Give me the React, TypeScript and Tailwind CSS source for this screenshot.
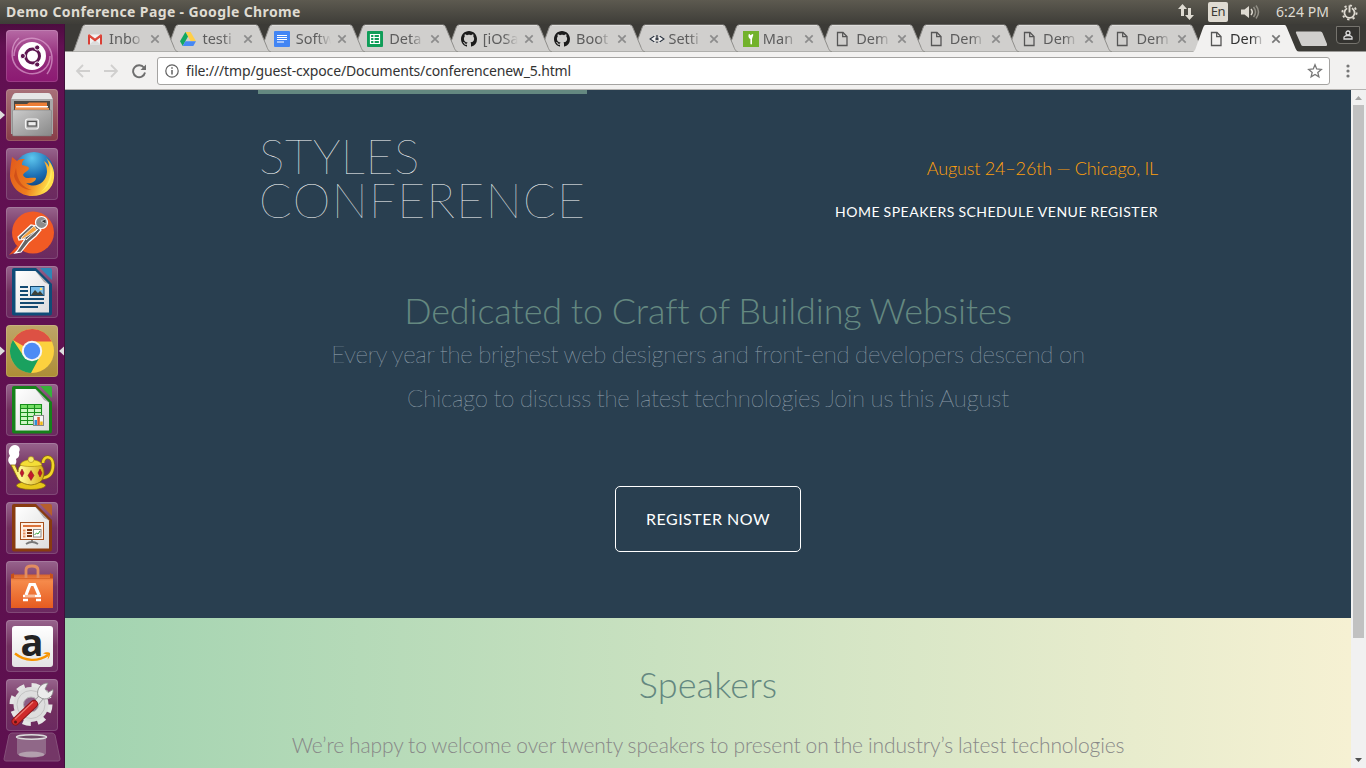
import React from "react";

const UI = "font-['Noto_Sans','Open_Sans',sans-serif]";

/* ---------- favicons ---------- */

const Gmail = () => (
  <svg viewBox="0 0 16 16" className="h-4 w-4">
    <path d="M1 3.5h14v10H1z" fill="#f2f2f2" />
    <path d="M2.5 13.5 8 8.6l5.5 4.9z" fill="#dcdcdc" />
    <path d="M1 13.5V3.6L8 9l7-5.4v9.9h-2V6.6L8 10.5 3 6.6v6.9z" fill="#d93f35" />
    <path d="M1 4.5 2 3l6 4.6L14 3l1 1.5-7 5.4z" fill="#dd4b3e" />
  </svg>
);
const Drive = () => (
  <svg viewBox="0 0 16 16" className="h-4 w-4">
    <path d="M5.4 1h5.2L16 10.2h-5.3z" fill="#ffcf48" />
    <path d="M5.4 1 0 10.3 2.7 15 8 5.6z" fill="#11a861" />
    <path d="M5.4 10.2H16L13.3 15H2.7z" fill="#4688f4" />
  </svg>
);
const Docs = () => (
  <svg viewBox="0 0 16 16" className="h-4 w-4">
    <rect width="16" height="16" rx="1" fill="#4285f4" />
    <path d="M3 4.500h10M3 6.500h10M3 8.500h10M3 11h7" stroke="#fff" strokeWidth="1.100" />
  </svg>
);
const Sheets = () => (
  <svg viewBox="0 0 16 16" className="h-4 w-4">
    <rect width="16" height="16" rx="1" fill="#0f9d58" />
    <path d="M3.5 3.5h9v9h-9zM3.5 6.5h9M3.5 9.5h9M7 3.5v9" stroke="#fff" strokeWidth="1.2" fill="none" />
  </svg>
);
const GitHub = () => (
  <svg viewBox="0 0 16 16" className="h-4 w-4">
    <path
      fill="#1b1b1b"
      d="M8 0C3.58 0 0 3.58 0 8c0 3.54 2.29 6.53 5.47 7.59.4.07.55-.17.55-.38 0-.19-.01-.82-.01-1.49-2.01.37-2.53-.49-2.69-.94-.09-.23-.48-.94-.82-1.13-.28-.15-.68-.52-.01-.53.63-.01 1.08.58 1.23.82.72 1.21 1.87.87 2.33.66.07-.52.28-.87.51-1.07-1.78-.2-3.64-.89-3.64-3.95 0-.87.31-1.59.82-2.15-.08-.2-.36-1.02.08-2.12 0 0 .67-.21 2.2.82.64-.18 1.32-.27 2-.27s1.36.09 2 .27c1.53-1.04 2.2-.82 2.2-.82.44 1.1.16 1.92.08 2.12.51.56.82 1.27.82 2.15 0 3.07-1.87 3.75-3.65 3.95.29.25.54.73.54 1.48 0 1.07-.01 1.93-.01 2.2 0 .21.15.46.55.38A8.01 8.01 0 0 0 16 8c0-4.42-3.58-8-8-8z"
    />
  </svg>
);
const CodeMark = () => (
  <svg viewBox="0 0 16 16" className="-ml-px h-4 w-4 translate-x-[3px]">
    <path d="M0 8 6 3.500v9z M16 8 10 3.500v9z" fill="#f4f4f4" />
    <path d="M5.400 5 1 8l4.400 3M10.600 5 15 8l-4.400 3" stroke="#2d3540" strokeWidth="1.200" fill="none" />
    <path d="M8 4v5M8 10.500v1.500M6.500 8h3" stroke="#2d3540" strokeWidth="1.300" />
  </svg>
);
const Green = () => (
  <svg viewBox="0 0 16 16" className="h-4 w-4 translate-x-[2px]">
    <rect width="16" height="16" fill="#72b22b" />
    <path d="M5.500 4q0-1 1-1l1 1.300L9.500 3q.8 0 .8 1L9.300 7 9 8v4.800c0 .8-1.600.8-1.600 0V8C6 7.500 5.200 6 5.500 4z" fill="#fff" />
  </svg>
);
const File = () => (
  <svg viewBox="0 0 16 16" className="h-4 w-4">
    <path d="M3.500 1.500h5.500l4 4v9h-9.500z" fill="none" stroke="#565656" strokeWidth="1.300" />
    <path d="M8.700 1.500v4.200H13" fill="none" stroke="#565656" strokeWidth="1.300" />
  </svg>
);

const tabs: { icon: React.ReactNode; label: string }[] = [
  { icon: <Gmail />, label: "Inbo" },
  { icon: <Drive />, label: "testi" },
  { icon: <Docs />, label: "Softw" },
  { icon: <Sheets />, label: "Deta" },
  { icon: <GitHub />, label: "[iOSa" },
  { icon: <GitHub />, label: "Boot" },
  { icon: <CodeMark />, label: "Setti" },
  { icon: <Green />, label: "Man" },
  { icon: <File />, label: "Dem" },
  { icon: <File />, label: "Dem" },
  { icon: <File />, label: "Dem" },
  { icon: <File />, label: "Dem" },
  { icon: <File />, label: "Dem" },
];

function Tab({ icon, label, index, active }: { icon: React.ReactNode; label: string; index: number; active: boolean }) {
  return (
    <div className="relative -mr-[12.600px] h-7 w-[106px] shrink-0" style={{ zIndex: active ? 30 : 20 - index }}>
      <svg viewBox="0 0 106 28" className="absolute inset-0 h-7 w-[106px]">
        <path
          d="M0 28 C2 27 2.500 25 3.500 22 L10 4 C11 1.500 11.500 1 13 1 H91 C92.500 1 93 1.500 94 4 L101.500 22 C103 26 104 27.500 106 28 Z"
          fill={active ? "#f2f1f0" : "#d0cfcd"}
          stroke={active ? "none" : "#8f8e8b"}
          strokeWidth="1"
        />
        <path d="M13 1.500H91" stroke={active ? "#fafafa" : "#dedddb"} />
      </svg>
      <div className="relative flex h-7 items-center pt-px pl-[15px]">
        {icon}
        <span
          className={
            "ml-[6px] w-[35px] whitespace-nowrap text-[14.500px] [mask-image:linear-gradient(to_right,black_60%,transparent)] " +
            (active ? "text-[#333]" : "text-[#5d5d5d]")
          }
        >
          {label}
        </span>
        <svg viewBox="0 0 10 10" className="ml-[6px] h-[10px] w-[10px]">
          <path d="M1.300 1.300 8.700 8.700M8.700 1.300 1.300 8.700" stroke={active ? "#777" : "#8c8c8c"} strokeWidth="1.700" />
        </svg>
      </div>
    </div>
  );
}

/* ---------- launcher ---------- */

const Ubuntu = () => (
  <svg viewBox="0 0 52 52" className="h-full w-full">
    <path d="M8 26C8 8 30 2 42 16c6 8 5 20-1 28M44 26c0 18-22 24-34 10C4 28 5 14 13 8" stroke="#e7b4dc" strokeWidth="1.500" opacity=".6" fill="none" />
    <circle cx="26" cy="26" r="14" fill="#fff" />
    <circle cx="26.500" cy="26" r="7" fill="none" stroke="#5e1650" strokeWidth="3" />
    <g fill="#5e1650" stroke="#fff" strokeWidth="1">
      <circle cx="16.800" cy="26" r="2.600" />
      <circle cx="31.200" cy="17.500" r="2.600" />
      <circle cx="31.200" cy="34.500" r="2.600" />
    </g>
  </svg>
);
const Files = () => (
  <svg viewBox="0 0 52 52" className="h-full w-full">
    <defs>
      <linearGradient id="cab" x1="0" y1="0" x2="1" y2="1">
        <stop offset="0" stopColor="#ccc" />
        <stop offset="1" stopColor="#888" />
      </linearGradient>
    </defs>
    <path d="M7 6q1-2 3-2h32q2 0 3 2l2 4v35H5V10z" fill="#a9a9a9" />
    <path d="M7 6q1-2 3-2h32q2 0 3 2l1.500 4h-41z" fill="#e6e6e6" />
    <path d="M8 12h36v10H8z" fill="#4b4843" />
    <path d="M9 15h12l2-1.500h18V21H9z" fill="#ed7e36" />
    <path d="M10 17h32v1.500H10z" fill="#fff" />
    <path d="M9 19h34v3H9z" fill="#f19751" />
    <rect x="6.500" y="21" width="39" height="26" rx="1" fill="url(#cab)" stroke="#777" strokeWidth=".5" />
    <rect x="19.500" y="30" width="13" height="10" rx="2.500" fill="#b9b9b9" stroke="#f3f3f3" strokeWidth="1.200" />
    <rect x="21.800" y="32.500" width="8.500" height="4.500" fill="#eee" stroke="#555" strokeWidth="1.200" />
  </svg>
);
const Firefox = () => (
  <svg viewBox="0 0 52 52" className="h-full w-full">
    <defs>
      <radialGradient id="globe" cx=".45" cy=".15" r=".9">
        <stop offset="0" stopColor="#5dc6ee" />
        <stop offset=".5" stopColor="#1c6fb4" />
        <stop offset="1" stopColor="#0a2b63" />
      </radialGradient>
      <linearGradient id="fox" x1="0" y1="0" x2="1" y2=".35">
        <stop offset="0" stopColor="#e0571c" />
        <stop offset=".6" stopColor="#ee7d1d" />
        <stop offset="1" stopColor="#ffe04a" />
      </linearGradient>
    </defs>
    <circle cx="28" cy="24" r="20" fill="url(#globe)" />
    <path
      d="M6 9c2 1 3 3 5 4 2-2 5-2 8-2-3 2-3 4-3 6 3 1 6 1 7 3 0 3-5 4-6 7 2 5 8 2 13 3 0 4-6 6-10 5 8 6 20 1 21-11 0-6-2-8-3-11 3 2 4 4 5 6 0-4-1-6-3-9 6 5 9 12 8 20-1 11-10 18-22 18S5 39 4 28c0-7 1-12 2-19z"
      fill="url(#fox)"
    />
    <path d="M44 15c4 10 2 22-9 29 8-8 11-17 9-29z" fill="#fff06a" opacity=".8" />
    <path d="M10 20c1 13 7 20 16 22-9 0-16-6-18-14z" fill="#b93213" opacity=".45" />
  </svg>
);
const Postman = () => (
  <svg viewBox="0 0 52 52" className="h-full w-full">
    <circle cx="27" cy="25.500" r="21" fill="#f15a24" />
    <path d="M3 48 11 39 16 43 8 46z" fill="#e94f1e" />
    <path d="M31 19 25 18 12 30l1 3 6-1-8 12-2 2 6-1 8-10 7-6 5-6z" fill="#666" stroke="#fff" strokeWidth="1.200" />
    <path d="m28 19-12 11-1 3 16-10z" fill="#f8a13a" stroke="#fff" strokeWidth=".8" />
    <path d="m32 22-12 11" stroke="#fff" strokeWidth="1" />
    <circle cx="35.500" cy="15.500" r="6" fill="#8c8c8c" stroke="#fff" strokeWidth="1.200" />
    <path d="m35 14 5-2v5z" fill="#333" stroke="#ddd" strokeWidth=".7" />
  </svg>
);
function Office({ id, edge, fold, children }: { id: string; edge: string; fold: string; children: React.ReactNode }) {
  return (
    <svg viewBox="0 0 52 52" className="h-full w-full">
      <defs>
        <linearGradient id={id} x1="0" y1="0" x2="1" y2="1">
          <stop offset="0" stopColor="#fff" />
          <stop offset="1" stopColor="#ddd" />
        </linearGradient>
      </defs>
      <path d="M8 2h22l16 16v29q0 2.500-2 2.500H8q-2 0-2-2V4q0-2 2-2z" fill={edge} />
      <path d="M34 2h10q2 0 2 2v10z" fill={fold} />
      <path d="M9.500 5h20L43 18.500V46.500H9.500z" fill={`url(#${id})`} />
      <path d="M29.500 5 43 18.500 38 16z" fill="#aaa" />
      {children}
    </svg>
  );
}
const Writer = () => (
  <Office id="wr" edge="#0f4c78" fold="#2f86b6">
    <path d="M14 21h8M14 25h8M14 29h8M14 33h24M14 37h24M14 41h18" stroke="#134a72" strokeWidth="1.800" />
    <rect x="24.500" y="20.500" width="13.500" height="9" fill="#79bdea" stroke="#134a72" />
    <path d="m25 29 4-5 3 3 2-2 3.500 4z" fill="#3f4238" />
    <circle cx="35" cy="23" r="1.300" fill="#ffe36d" />
  </Office>
);
const Calc = () => (
  <Office id="ca" edge="#16811a" fold="#37b13a">
    <path d="M14 20h22v20H14z" fill="#cdf7c4" />
    <path d="M14 20h22v4H14z" fill="#75de65" />
    <path d="M14.500 20.500h21v20h-21zM14 24.500h22M14 28.500h22M14 32.500h22M14 36.500h22M21.500 20v20M28.500 20v20" stroke="#188f1c" strokeWidth="1.100" fill="none" />
    <rect x="27.500" y="31.500" width="10" height="10" fill="#f5f5f5" stroke="#888" />
    <path d="M28.500 36h2.500v5h-2.500z" fill="#2e8fd8" />
    <path d="M31.300 33h2.500v8h-2.500z" fill="#e05c2e" />
    <path d="M34.200 37.500h2.500v3.500h-2.500z" fill="#f1b914" />
  </Office>
);
const Impress = () => (
  <Office id="im" edge="#883b10" fold="#b65f2d">
    <rect x="14.500" y="20.500" width="23" height="17" fill="#fff0e4" stroke="#a5501f" />
    <path d="M17 24h18" stroke="#dc743c" strokeWidth="2" />
    <path d="M17 28.500h2.500M17 31.500h2.500M17 34.500h2.500" stroke="#e99364" strokeWidth="2" />
    <path d="M21 28h5M21 31h5M21 34h5" stroke="#7b3510" strokeWidth="2" />
    <rect x="27.500" y="27.500" width="7.500" height="7.500" fill="#fff" stroke="#888" />
    <path d="m28.500 33 2-2 1.500 1 2-3" stroke="#32a438" fill="none" />
    <path d="M26 38v2M20 42q6-4 12 0" stroke="#777" strokeWidth="1.800" fill="none" />
  </Office>
);
const Teapot = () => (
  <svg viewBox="0 0 52 52" className="h-full w-full">
    <defs>
      <linearGradient id="pot" x1="0" y1="0" x2="1" y2="0">
        <stop offset="0" stopColor="#f6e23a" />
        <stop offset=".3" stopColor="#fff894" />
        <stop offset="1" stopColor="#d8ae12" />
      </linearGradient>
    </defs>
    <path d="M5 22c-4-3-3-7-1-9C1 8 4 2 9 2c4 0 6 4 4 7 1 4-1 6-3 7 1 3 0 5-2 7z" fill="#fff" />
    <path d="M37 20c0-8 10-8 10 2 0 8-4 13-12 13" fill="none" stroke="#8b7107" strokeWidth="4" />
    <path d="M37 20c0-8 10-8 10 2 0 8-4 13-12 13" fill="none" stroke="#f2d52a" strokeWidth="2.500" />
    <ellipse cx="25" cy="42.500" rx="14.500" ry="4" fill="#e7c71c" stroke="#866a08" strokeWidth=".7" />
    <path d="M5 22h4l3 7c0-5 2-9 13-9s13 4 13 10-3 11-13 12C14 41 12 36 10 32z" fill="url(#pot)" stroke="#866a08" strokeWidth=".8" />
    <path d="M14 22c2-7 20-7 22 0-4 2-18 2-22 0z" fill="#f4de37" stroke="#a5850c" strokeWidth=".6" />
    <circle cx="25" cy="16.500" r="3" fill="#f8e96c" stroke="#a5850c" strokeWidth=".6" />
    <path d="m16 26 2 4-2 4-2-4zM25 27.500l3 5-3 5-3-5zM34 26l2 4-2 4-2-4z" fill="#c3182b" stroke="#7b1420" strokeWidth=".5" />
  </svg>
);
const Software = () => (
  <svg viewBox="0 0 52 52" className="h-full w-full">
    <defs>
      <linearGradient id="bag" x1="0" y1="0" x2="0" y2="1">
        <stop offset="0" stopColor="#d9662d" />
        <stop offset=".2" stopColor="#f58a4b" />
        <stop offset="1" stopColor="#e65b20" />
      </linearGradient>
    </defs>
    <path d="M5 13.500h42V47H5z" fill="url(#bag)" />
    <path d="M5 13.500 8 12v5h36v-5l3 1.500v4H5z" fill="#c6501b" />
    <path d="M20 17V9q0-4 6-4t6 4v8" fill="none" stroke="#e18c61" strokeWidth="2.800" />
    <path d="m20 34 4-10.500h4.500L33 34" fill="none" stroke="#fff" strokeWidth="3.200" />
    <path d="M17 35h18M17 39h5M30 39h5" stroke="#fff" strokeWidth="2.400" />
    <path d="M19 35h10" stroke="#f47b37" strokeWidth="1" />
  </svg>
);
const Amazon = () => (
  <div className="flex h-full items-center justify-center">
    <div className="relative flex h-[41px] w-[41px] justify-center rounded-[3px] bg-gradient-to-b from-white to-[#e4e4e4]">
      <span className="-mt-[7px] font-['Open_Sans',sans-serif] text-[38px] leading-[44px] font-bold text-[#222]">a</span>
      <svg viewBox="0 0 41 41" className="absolute inset-0 h-full w-full">
        <path d="M3 27.500c10 8 23 8.500 33 1.500" stroke="#f79400" strokeWidth="2.400" fill="none" />
        <path d="M31 27.500c2-1.500 6-1.500 7-.5.500 2-1 5-2.500 6.500.5-2 1.200-3.500.7-4.500-1.200-.8-3.200-1-5.200-1.500z" fill="#f79400" />
      </svg>
    </div>
  </div>
);
const Settings = () => (
  <svg viewBox="0 0 52 52" className="h-full w-full">
    <circle cx="25" cy="25.500" r="19" fill="none" stroke="#e5e5e5" strokeWidth="5" strokeDasharray="8 6.920" />
    <circle cx="25" cy="25.500" r="12.500" fill="none" stroke="#dedede" strokeWidth="10" />
    <circle cx="25" cy="25.500" r="14" fill="none" stroke="#c4c4c4" strokeWidth="1" />
    <circle cx="25" cy="25.500" r="7.500" fill="#8d5f85" stroke="#bbb" />
    <path d="M26 29 37 16" stroke="#999" strokeWidth="6" />
    <path d="M26 29 37 16" stroke="#e2e2e2" strokeWidth="4.500" />
    <path d="M32 17c-2-7 3-13 10-13l-3 6 3 3.500 5-3c1 6-5 11-11 9z" fill="#ececec" stroke="#888" strokeWidth=".8" />
    <path d="M9.500 42.500 28 25" stroke="#8c1519" strokeWidth="8" strokeLinecap="round" />
    <path d="M9.500 42.500 28 25" stroke="#cf2a2b" strokeWidth="6.200" strokeLinecap="round" />
    <path d="m9 40 18-17" stroke="#ee7b73" strokeWidth="1.200" />
    <circle cx="9.500" cy="43" r="1.500" fill="#5d1515" />
  </svg>
);
const Chrome = () => (
  <svg viewBox="0 0 52 52" className="h-full w-full">
    <circle cx="26" cy="26" r="22" fill="#fcd13e" />
    <path d="M26 26 6.950 15A22 22 0 0 1 45.800 16.400H26z" fill="#dd5144" />
    <path d="M6.950 15A22 22 0 0 0 25 48l9.300-17.200L17.500 31z" fill="#1aa15f" />
    <circle cx="26" cy="26" r="10.200" fill="#f5f5f5" />
    <circle cx="26" cy="26" r="8.200" fill="#4c8bf5" />
  </svg>
);

const PLAIN = "bg-gradient-to-b from-[#97648d] via-[#72305f] to-[#6b2960]";
const launcher: { node: React.ReactNode; tint: string; left?: boolean; right?: boolean }[] = [
  { node: <Ubuntu />, tint: "bg-gradient-to-b from-[#b66aa5] via-[#942a7c] to-[#8c1972]" },
  { node: <Files />, tint: "bg-gradient-to-b from-[#a87179] to-[#873c47]", left: true },
  { node: <Firefox />, tint: PLAIN },
  { node: <Postman />, tint: PLAIN },
  { node: <Writer />, tint: PLAIN },
  { node: <Chrome />, tint: "bg-gradient-to-b from-[#bea568] to-[#ad8e35]", left: true, right: true },
  { node: <Calc />, tint: PLAIN },
  { node: <Teapot />, tint: PLAIN },
  { node: <Impress />, tint: PLAIN },
  { node: <Software />, tint: PLAIN },
  { node: <Amazon />, tint: PLAIN },
  { node: <Settings />, tint: PLAIN },
];

function Launcher() {
  return (
    <aside className="flex w-[65px] shrink-0 flex-col overflow-hidden border-r border-[#40103a] bg-gradient-to-b from-[#4d0c40] via-[#621052] via-[3%] to-[#5d104f] pt-[6px]">
      {launcher.map((item, i) => (
        <div key={i} className="mb-[7px] flex h-[52px] shrink-0 items-center">
          <svg viewBox="0 0 6 12" className="h-3 w-[6px]">
            {item.left && <path d="M0 1.500 5 6 0 10.500z" fill="#ddd" />}
          </svg>
          <div className={"h-[52px] w-[52px] rounded-[4px] shadow-[inset_0_0_0_1px_rgba(255,255,255,0.15)] " + item.tint}>{item.node}</div>
          <svg viewBox="0 0 6 12" className="h-3 w-[6px]">
            {item.right && <path d="M6 1.500 1 6 6 10.500z" fill="#ddd" />}
          </svg>
        </div>
      ))}
      <svg viewBox="0 0 64 32" className="-mt-[6px] h-8 w-16 shrink-0">
        <path d="M12 1h40q2 0 3 2l5 24q0 2-2 2H6q-2 0-2-2L9 3q1-2 3-2z" fill="#743767" stroke="#85507a" />
        <path d="M17 4v17c0 5 29 5 29 0V4z" fill="#9a7a93" opacity=".75" />
        <ellipse cx="31.500" cy="22.500" rx="13" ry="3" fill="#bbaeb8" opacity=".8" />
        <ellipse cx="31.500" cy="5" rx="15" ry="2.200" fill="#6f4a67" stroke="#ddd" strokeWidth="1.400" />
      </svg>
    </aside>
  );
}

/* ---------- top panel ---------- */

function Panel() {
  return (
    <div className={"flex h-6 items-center bg-gradient-to-b from-[#5d5a50] to-[#3e3d38] pl-[6px] text-[#dfdbd2] " + UI}>
      <span className="-mt-px text-[14px] font-bold tracking-[0.370px] whitespace-nowrap">Demo Conference Page - Google Chrome</span>
      <div className="ml-auto flex items-center pr-[8px]">
        <svg viewBox="0 0 18 18" className="h-[18px] w-[18px]">
          <path d="M5.500 1 10 6H7v7H4V6H1zM12.500 17 8 12h3V5h3v7h3z" fill="#dfdbd2" />
        </svg>
        <span className="ml-[13px] flex h-5 w-5 items-center justify-center rounded-[2px] bg-[#dfdbd2] text-[13px] tracking-[-0.300px] text-[#3c3b37]">En</span>
        <svg viewBox="0 0 20 16" className="ml-[12px] h-4 w-5">
          <path d="M1 5.500h3.500L9 2v12l-4.500-3.500H1z" fill="#dfdbd2" />
          <path d="M11 5q2.500 3 0 6" stroke="#dfdbd2" strokeWidth="1.500" fill="none" />
          <path d="M13.500 3q4 5 0 10M16 1.500q5 6.500 0 13" stroke="#918e85" strokeWidth="1.500" fill="none" />
        </svg>
        <span className="ml-[16px] w-[54px] text-[14px] leading-5 tracking-[0.050px] whitespace-nowrap">6:24 PM</span>
        <svg viewBox="0 0 18 18" className="ml-[11px] h-[17px] w-[17px]">
          <circle cx="9" cy="9" r="7.500" fill="none" stroke="#dfdbd2" strokeWidth="2" strokeDasharray="2.400 3.490" />
          <path d="M6.500 4.500a5.400 5.400 0 1 0 5 0" fill="none" stroke="#dfdbd2" strokeWidth="1.900" />
          <path d="M9 1.500V9" stroke="#dfdbd2" strokeWidth="2" />
        </svg>
      </div>
    </div>
  );
}

function TabStrip() {
  return (
    <div className={"flex h-7 border-b border-[#9b9a97] bg-[#3c3b37] pl-[7px] " + UI}>
      {tabs.map((t, i) => (
        <Tab key={i} icon={t.icon} label={t.label} index={i} active={i === tabs.length - 1} />
      ))}
      <svg viewBox="0 0 36 18" className="mt-[6px] ml-[7px] h-[18px] w-[36px] shrink-0">
        <path d="M3.500 1.500h24q1.500 0 2 1.500l4.500 11q.5 2-1 2H10q-1.500 0-2-1.500L3 3q-.5-1.500.5-1.500z" fill="#d0cfcd" />
      </svg>
      <div className="mt-[2px] mr-[6px] ml-auto flex h-[18px] w-[24px] items-center justify-center rounded-b-[4px] border border-[#75736d] bg-[#33322f]">
        <svg viewBox="0 0 10 10" className="h-[10px] w-[10px]">
          <circle cx="5" cy="3" r="2" fill="none" stroke="#ddd" strokeWidth="1.300" />
          <path d="M1 9V7q1-1.500 4-1.500T9 7v2z" fill="none" stroke="#ddd" strokeWidth="1.300" />
        </svg>
      </div>
    </div>
  );
}

function Toolbar() {
  return (
    <div className={"flex h-[38px] items-center border-b border-[#b5b3b1] bg-[#f2f1f0] pl-[10px] " + UI}>
      <svg viewBox="0 0 16 16" className="h-4 w-4">
        <path d="M15 8H2M8 2 2 8l6 6" stroke="#d0cfce" strokeWidth="1.800" fill="none" />
      </svg>
      <svg viewBox="0 0 16 16" className="ml-[12px] h-4 w-4">
        <path d="M1 8h13M8 2l6 6-6 6" stroke="#d0cfce" strokeWidth="1.800" fill="none" />
      </svg>
      <svg viewBox="0 0 16 16" className="ml-[12px] h-4 w-4">
        <path d="M13 4.800A6 6 0 1 0 14 9.500" stroke="#6e6e6e" strokeWidth="1.900" fill="none" />
        <path d="M15 1.500V7H9.500z" fill="#6e6e6e" />
      </svg>
      <div className="ml-[10px] flex h-7 flex-1 items-center rounded-[3px] border border-[#a4a3a1] bg-white pr-[6px] pl-[7px]">
        <svg viewBox="0 0 14 14" className="h-[14px] w-[14px]">
          <circle cx="7" cy="7" r="6.200" fill="none" stroke="#606060" strokeWidth="1.200" />
          <path d="M7 6v4.500M7 3.300v1.500" stroke="#606060" strokeWidth="1.500" />
        </svg>
        <span className="ml-[7px] text-[14px] tracking-[-0.150px] whitespace-nowrap text-[#333]">file:///tmp/guest-cxpoce/Documents/conferencenew_5.html</span>
        <svg viewBox="0 0 16 16" className="ml-auto h-4 w-4">
          <path d="m8 1.800 1.700 4.200 4.600.4-3.500 3 1.100 4.500L8 11.500l-3.900 2.400 1.100-4.500-3.500-3L6.300 6z" fill="none" stroke="#777" strokeWidth="1.300" />
        </svg>
      </div>
      <svg viewBox="0 0 4 14" className="mr-[16px] ml-[16px] h-[14px] w-1">
        <circle cx="2" cy="2" r="1.600" fill="#777" />
        <circle cx="2" cy="7" r="1.600" fill="#777" />
        <circle cx="2" cy="12" r="1.600" fill="#777" />
      </svg>
    </div>
  );
}

/* ---------- web page ---------- */

function Page() {
  return (
    <div className="flex min-w-0 flex-1 flex-col overflow-hidden font-['Lato',sans-serif]">
      <section className="h-[528px] shrink-0 bg-[#293f50] text-white">
        <header className="mx-auto flex w-[900px] justify-between">
          <h1 className="w-[329px] shrink-0 border-t-4 border-[#648880] pt-10 pl-px font-['Lato_Hairline','Lato',sans-serif] text-[48px] leading-[44px] font-thin tracking-[0.600px] whitespace-nowrap uppercase">
            Styles
            <br />
            <span className="tracking-[1.350px]">Conference</span>
          </h1>
          <div className="flex flex-col items-end pt-[67px] whitespace-nowrap">
            <p className="text-[18px] leading-[22px] font-light tracking-[-0.130px] text-[#ff9f0c] [word-spacing:-0.400px]">August 24–26th — Chicago, IL</p>
            <nav className="mt-[22px] flex gap-[3.500px] text-[14px] leading-[22px] tracking-[0.500px] uppercase">
              <a>Home</a>
              <a>Speakers</a>
              <a>Schedule</a>
              <a>Venue</a>
              <a>Register</a>
            </nav>
          </div>
        </header>
        <div className="flex flex-col items-center pt-[65px] whitespace-nowrap">
          <h2 className="text-[36px] leading-[44px] font-light tracking-[-0.100px] text-[#648880] [word-spacing:-0.900px]">Dedicated to Craft of Building Websites</h2>
          <p className="text-center font-['Lato_Hairline','Lato',sans-serif] text-[24px] leading-[44px] font-thin tracking-[-0.200px] text-[#8b9ba6] [word-spacing:-0.900px] [-webkit-text-stroke:0.200px_#8b9ba6]">
            Every year the brighest web designers and front-end developers descend on
            <br />
            Chicago to discuss the latest technologies Join us this August
          </p>
          <a className="mt-[66px] flex h-[66px] w-[186px] items-center justify-center rounded-[5px] border border-white text-[16px] tracking-[0.500px]">
            REGISTER NOW
          </a>
        </div>
      </section>
      <section className="flex flex-1 flex-col items-center bg-gradient-to-r from-[#a1d3b0] to-[#f6f1d3] pt-[44px] whitespace-nowrap">
        <h2 className="text-[36px] leading-[44px] font-light tracking-[0.150px] text-[#648880]">Speakers</h2>
        <p className="mt-[28px] text-[21px] leading-[22px] font-light tracking-[-0.110px] text-[#888] [word-spacing:-0.600px]">
          We’re happy to welcome over twenty speakers to present on the industry’s latest technologies
        </p>
      </section>
    </div>
  );
}

function Scrollbar() {
  return (
    <div className="flex w-[15px] shrink-0 flex-col items-center bg-[#f1f1f1]">
      <svg viewBox="0 0 15 15" className="h-[15px] w-[15px] shrink-0">
        <path d="M4 10h7L7.500 6z" fill="#a3a3a3" />
      </svg>
      <div className="h-[533px] w-[11px] bg-[#c1c1c1]" />
      <svg viewBox="0 0 15 15" className="mt-auto h-[15px] w-[15px] shrink-0">
        <path d="M4 5h7L7.500 9z" fill="#505050" />
      </svg>
    </div>
  );
}

export default function App() {
  return (
    <div className="flex h-[768px] w-[1366px] flex-col overflow-hidden">
      <Panel />
      <div className="flex min-h-0 flex-1">
        <Launcher />
        <main className="flex min-w-0 flex-1 flex-col">
          <TabStrip />
          <Toolbar />
          <div className="flex min-h-0 flex-1">
            <Page />
            <Scrollbar />
          </div>
        </main>
      </div>
    </div>
  );
}
